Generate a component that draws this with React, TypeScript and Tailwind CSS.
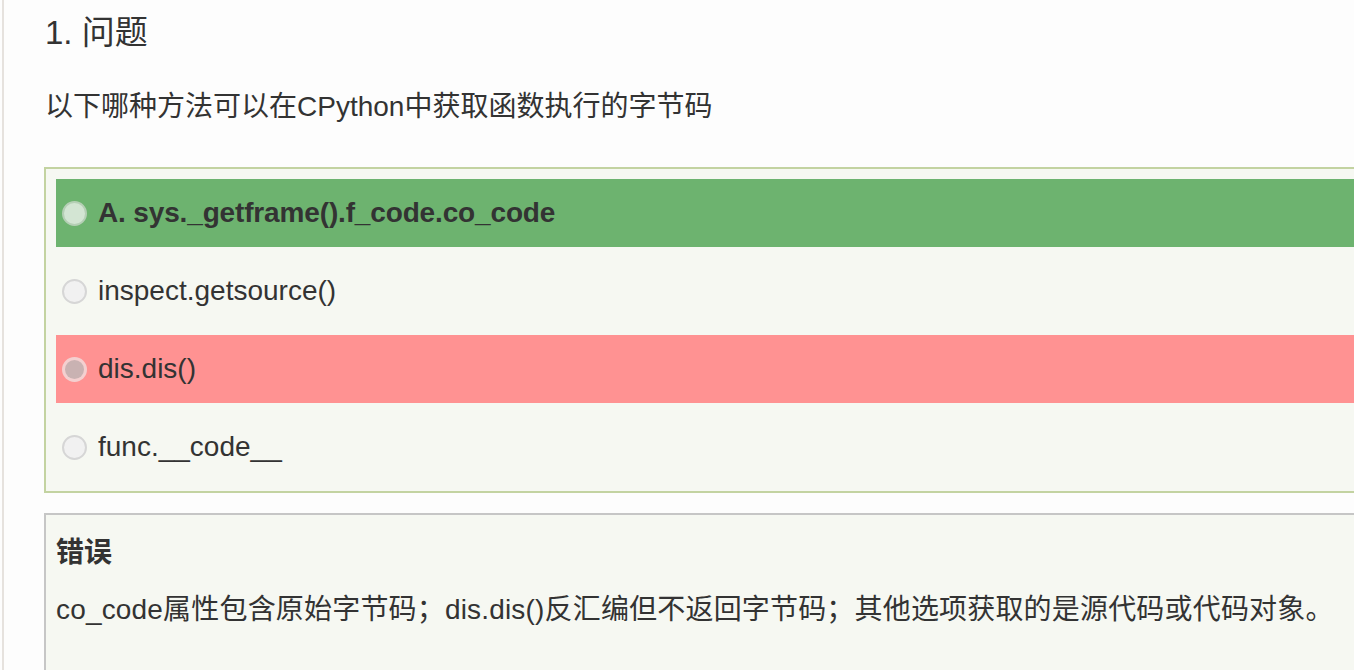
import React from "react";

const options = [
  { label: "A. sys._getframe().f_code.co_code", state: "correct" },
  { label: "inspect.getsource()", state: "none" },
  { label: "dis.dis()", state: "wrong" },
  { label: "func.__code__", state: "none" },
];

const Radio = (props: { state: string }) => {
  if (props.state === "correct") {
    return <div className="w-[25px] h-[25px] rounded-full border-2 border-[#b5cfb5] bg-[#d3e5d3] shrink-0" />;
  }
  if (props.state === "wrong") {
    return (
      <div className="w-[25px] h-[25px] rounded-full bg-[#f4d0d0] shrink-0 flex items-center justify-center">
        <div className="w-[19px] h-[19px] rounded-full bg-[#c9b2b2]" />
      </div>
    );
  }
  return <div className="w-[25px] h-[25px] rounded-full border-2 border-[#d6d6d6] bg-[#f1f1f1] shrink-0" />;
};

const App = () => {
  return (
    <div
      className="h-[670px] w-[1354px] overflow-hidden bg-[#fdfdfd] text-[#333]"
      style={{ fontFamily: '"Liberation Sans", "Noto Sans CJK SC", sans-serif' }}
    >
      <div className="ml-[2px] h-full border-l-2 border-[#e6e2de] pl-[40px]">
        <div className="h-[62px] pt-[3px] flex items-center text-[33px] pl-[1px]">1. 问题</div>
        <div className="mt-[18px] h-[54px] flex items-center text-[28px] pl-[1px]">
          以下哪种方法可以在CPython中获取函数执行的字节码
        </div>

        {/* options */}
        <div className="mt-[33px] w-[1330px] border-2 border-[#c3d3a1] bg-[#f6f8f2] p-[10px] flex flex-col gap-[10px]">
          {options.map((o) => (
            <div
              key={o.label}
              className={
                "h-[68px] flex items-center gap-[11px] pl-[6px] text-[28px] " +
                (o.state === "correct" ? "bg-[#6db36f] font-semibold tracking-[-0.15px]" : o.state === "wrong" ? "bg-[#ff9292]" : "")
              }
            >
              <Radio state={o.state} />
              <span>{o.label}</span>
            </div>
          ))}
        </div>

        {/* explanation */}
        <div className="mt-[20px] w-[1330px] h-[200px] border-2 border-[#c6c6c6] bg-[#f6f8f2] pl-[10px] pt-[17px] flex flex-col gap-[15px] text-[28px]">
          <div className="font-bold leading-[42px]">错误</div>
          <div className="leading-[42px] tracking-[0.18px]">
            co_code属性包含原始字节码；dis.dis()反汇编但不返回字节码；其他选项获取的是源代码或代码对象。
          </div>
        </div>
      </div>
    </div>
  );
};

export default App;
